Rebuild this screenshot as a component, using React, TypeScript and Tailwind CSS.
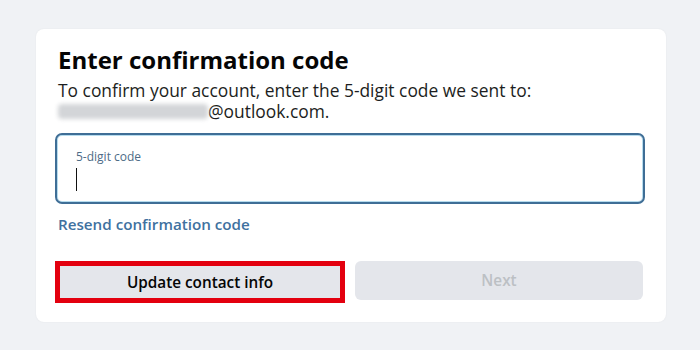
import React from 'react';

export default function App() {
  return (
    <div className="min-h-[350px] w-[700px] bg-[#f0f2f5] pt-[29px] pl-[36px] font-['Open_Sans',sans-serif]">
      <div className="w-[630px] h-[293px] rounded-[8px] bg-white shadow-[0_0_2px_rgba(0,0,0,0.06)] pl-[19px] pr-[21px] pt-[15px]">
        <h1 className="pl-[3px] text-[24px] font-bold leading-[32px] text-[#050505]">
          Enter confirmation code
        </h1>
        <div className="pl-[3px] mt-[4px] text-[17.4px] leading-[21px] text-[#1c1e21]">
          <div>To confirm your account, enter the 5-digit code we sent to:</div>
          <div className="flex items-center">
            <span className="inline-block w-[150px] h-[15px] bg-[#d3d5d8] blur-[2px] rounded-sm" />
            <span>@outlook.com.</span>
          </div>
        </div>

        {/* Code input */}
        <div className="mt-[11px] h-[71px] rounded-[7px] border-2 border-[#3f6e96] shadow-[inset_0_0_0_1px_#b6dcee] px-[19px] pt-[15px]">
          <div className="text-[12px] leading-[14px] text-[#4d6c87]">5-digit code</div>
          <div className="mt-[4px] w-px h-[23px] bg-[#111]" />
        </div>

        <div className="pl-[3px] mt-[10px] text-[15.2px] font-semibold leading-[20px] text-[#40719f]">
          Resend confirmation code
        </div>

        <div className="mt-[27px] grid grid-cols-2 gap-[10px]">
          <button className="h-[42px] border-[5px] border-[#e3000f] bg-[#e4e6eb] text-[15.3px] font-semibold text-[#050505]">
            Update contact info
          </button>
          <button className="h-[39px] rounded-[6px] bg-[#e4e6eb] text-[15.3px] font-semibold text-[#bcc0c4] mr-[2px]">
            Next
          </button>
        </div>
      </div>
    </div>
  );
}
